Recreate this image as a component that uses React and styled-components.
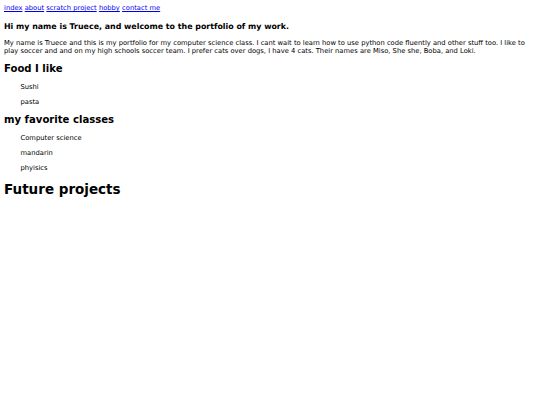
import React from "react";
import styled, { createGlobalStyle } from "styled-components";

const Global = createGlobalStyle`
  html, body { padding: 0; background: #fff; }
  body {
    margin: 4px;
    font-family: "DejaVu Sans", Verdana, sans-serif;
    font-size: 6.75px;
    color: #000;
    -webkit-font-smoothing: antialiased;
  }
`;

const Nav = styled.nav`
  display: flex;
  gap: 2.2px;
  padding-top: 0;
`;

const NavLink = styled.a`
  color: #0000ee;
  text-decoration: underline;
`;

const Title = styled.h3`
  font-size: 7.9px;
  font-weight: bold;
  margin: 9.6px 0 8.4px;
`;

const Para = styled.p`
  margin: 0;
`;

const Heading = styled.h2`
  font-size: ${(p) => (p.$big ? "13.5px" : "10.1px")};
  font-weight: bold;
  margin: ${(p) => (p.$big ? "9.2px 0" : "7.6px 0 9.6px")};
`;

const List = styled.ul`
  list-style: none;
  margin: 0;
  padding: 0 0 0 16.5px;
  display: flex;
  flex-direction: column;
  gap: 6.9px;
`;

const Item = styled.li`
  line-height: normal;
`;

export default function App() {
  return (
    <>
      <Global />
      <Nav>
        <NavLink href="#">index</NavLink>
        <NavLink href="#">about</NavLink>
        <NavLink href="#">scratch project</NavLink>
        <NavLink href="#">hobby</NavLink>
        <NavLink href="#">contact me</NavLink>
      </Nav>
      <Title>Hi my name is Truece, and welcome to the portfolio of my work.</Title>
      <Para>
        My name is Truece and this is my portfolio for my computer science class. I cant wait to learn how to use python code fluently and other stuff too. I like to play soccer and and on my high schools soccer team. I prefer cats over dogs, I have 4 cats. Their names are Miso, She she, Boba, and Loki.
      </Para>
      <Heading>Food I like</Heading>
      <List>
        <Item>Sushi</Item>
        <Item>pasta</Item>
      </List>
      <Heading>my favorite classes</Heading>
      <List>
        <Item>Computer science</Item>
        <Item>mandarin</Item>
        <Item>phyisics</Item>
      </List>
      <Heading $big>Future projects</Heading>
    </>
  );
}
